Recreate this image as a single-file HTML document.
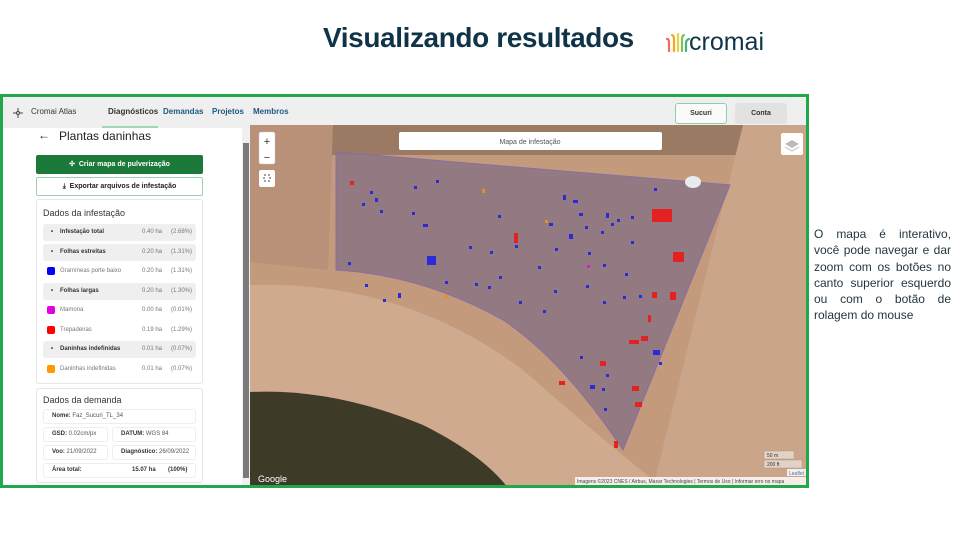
<!DOCTYPE html><html><head><meta charset="utf-8"><style>
*{box-sizing:border-box;margin:0;padding:0}
body{width:960px;height:540px;background:#fff;position:relative;overflow:hidden;font-family:"Liberation Sans",sans-serif}
.a{position:absolute}
.title{left:323px;top:22px;font-size:28px;font-weight:bold;color:#0f3447;letter-spacing:-0.4px}
.frame{left:0;top:94px;width:809px;height:394px;border:3px solid #22a84a;background:#fff;overflow:hidden}
.nav{left:0;top:0;width:803px;height:31px;background:#efefef;font-size:8px}
.side{font-size:7px;color:#333}
.row{position:absolute;left:43px;width:153px;height:17px;border-radius:3px;font-size:6px;line-height:17px}
.row.g{background:#efefef;font-weight:bold}
.row span{position:absolute}
.box{position:absolute;border:1px solid #e6e6e6;border-radius:3px;background:#fff}
.cell{position:absolute;border:1px solid #eee;border-radius:3px;height:15px;font-size:6px;line-height:13px;padding-left:8px;color:#555}
.cell b{color:#333}
.para div{text-align:justify;text-align-last:justify;white-space:nowrap}
.para div.l{text-align-last:left}
</style></head><body>
<div class="a title">Visualizando resultados</div>
<div class="a" style="left:666px;top:29px">
<svg width="24" height="24" viewBox="0 0 24 24" fill="none" stroke-width="2.2" stroke-linecap="round"><path d="M3 22V13Q3 10 1 10" stroke="#f26b5b"/><path d="M8 22V10Q8 7 6 6" stroke="#f5a623"/><path d="M12 22V5" stroke="#e6d43a"/><path d="M16 22V10Q16 7 18 6" stroke="#7cc35b"/><path d="M20 22V14Q20 11 23 10" stroke="#4caf7d"/></svg></div>
<div class="a" style="left:689px;top:28px;font-size:25px;color:#0f3447">cromai</div>

<div class="a frame">
 <div class="a nav">
  <svg class="a" style="left:10px;top:11px" width="10" height="10" viewBox="0 0 10 10" fill="none" stroke="#444"><circle cx="5" cy="5" r="1.5"/><path d="M5 0v3.5M5 6.5V10M0 5h3.5M6.5 5H10"/></svg>
  <span class="a" style="left:28px;top:10px;color:#333">Cromai Atlas</span>
  <span class="a" style="left:105px;top:10px;color:#333;font-weight:bold">Diagnósticos</span>
  <div class="a" style="left:99px;top:29px;width:56px;height:2px;background:#9fd8b5"></div>
  <span class="a" style="left:160px;top:10px;color:#1c5a80;font-weight:bold">Demandas</span>
  <span class="a" style="left:209px;top:10px;color:#1c5a80;font-weight:bold">Projetos</span>
  <span class="a" style="left:250px;top:10px;color:#1c5a80;font-weight:bold">Membros</span>
  <div class="a" style="left:672px;top:6px;width:52px;height:21px;border:1px solid #8fcfa7;border-radius:3px;background:#fafafa;text-align:center;line-height:19px;font-weight:bold;color:#333;font-size:7px">Sucuri</div>
  <div class="a" style="left:732px;top:6px;width:52px;height:21px;border-radius:3px;background:#e2e2e2;text-align:center;line-height:21px;font-weight:bold;color:#333;font-size:7px">Conta</div>
 </div>
 <div class="a side" style="left:0;top:31px;width:240px;height:360px">
  <span class="a" style="left:35px;top:0px;font-size:12px;color:#222">←</span>
  <span class="a" style="left:56px;top:1px;font-size:12px;color:#222">Plantas daninhas</span>
  <div class="a" style="left:33px;top:27px;width:167px;height:19px;background:#1b7a3a;border-radius:2px;color:#fff;font-weight:bold;text-align:center;line-height:19px">✣ &nbsp;Criar mapa de pulverização</div>
  <div class="a" style="left:33px;top:49px;width:167px;height:19px;border:1px solid #9fd1b1;border-radius:2px;color:#222;font-weight:bold;text-align:center;line-height:17px">⤓ &nbsp;Exportar arquivos de infestação</div>
  <div class="box" style="left:33px;top:71px;width:167px;height:185px"></div>
  <span class="a" style="left:40px;top:80px;font-size:9px;color:#333">Dados da infestação</span>
  <div class="row g" style="top:96px;left:40px"><span style="left:8px">•</span><span style="left:17px">Infestação total</span><span style="left:99px;font-weight:normal;color:#777">0.40 ha</span><span style="left:128px;font-weight:normal;color:#777">(2.68%)</span></div>
  <div class="row g" style="top:116px;left:40px"><span style="left:8px">•</span><span style="left:17px">Folhas estreitas</span><span style="left:99px;font-weight:normal;color:#777">0.20 ha</span><span style="left:128px;font-weight:normal;color:#777">(1.31%)</span></div>
  <div class="row" style="top:135px;left:40px;color:#777"><span style="left:4px;top:4px;width:8px;height:8px;background:#00f;border-radius:2px"></span><span style="left:17px">Gramíneas porte baixo</span><span style="left:99px">0.20 ha</span><span style="left:128px">(1.31%)</span></div>
  <div class="row g" style="top:155px;left:40px"><span style="left:8px">•</span><span style="left:17px">Folhas largas</span><span style="left:99px;font-weight:normal;color:#777">0.20 ha</span><span style="left:128px;font-weight:normal;color:#777">(1.30%)</span></div>
  <div class="row" style="top:174px;left:40px;color:#777"><span style="left:4px;top:4px;width:8px;height:8px;background:#e000e0;border-radius:2px"></span><span style="left:17px">Mamona</span><span style="left:99px">0.00 ha</span><span style="left:128px">(0.01%)</span></div>
  <div class="row" style="top:194px;left:40px;color:#777"><span style="left:4px;top:4px;width:8px;height:8px;background:#f00;border-radius:2px"></span><span style="left:17px">Trepadeiras</span><span style="left:99px">0.19 ha</span><span style="left:128px">(1.29%)</span></div>
  <div class="row g" style="top:213px;left:40px"><span style="left:8px">•</span><span style="left:17px">Daninhas indefinidas</span><span style="left:99px;font-weight:normal;color:#777">0.01 ha</span><span style="left:128px;font-weight:normal;color:#777">(0.07%)</span></div>
  <div class="row" style="top:233px;left:40px;color:#777"><span style="left:4px;top:4px;width:8px;height:8px;background:#f90;border-radius:2px"></span><span style="left:17px">Daninhas indefinidas</span><span style="left:99px">0.01 ha</span><span style="left:128px">(0.07%)</span></div>
  <div class="box" style="left:33px;top:260px;width:167px;height:95px"></div>
  <span class="a" style="left:40px;top:267px;font-size:9px;color:#333">Dados da demanda</span>
  <div class="cell" style="left:40px;top:281px;width:153px"><b>Nome:</b> Faz_Sucuri_TL_34</div>
  <div class="cell" style="left:40px;top:299px;width:65px"><b>GSD:</b> 0.02cm/px</div>
  <div class="cell" style="left:109px;top:299px;width:84px"><b>DATUM:</b> WGS 84</div>
  <div class="cell" style="left:40px;top:317px;width:65px"><b>Voo:</b> 21/09/2022</div>
  <div class="cell" style="left:109px;top:317px;width:84px"><b>Diagnóstico:</b> 26/09/2022</div>
  <div class="cell" style="left:40px;top:335px;width:153px"><b>Área total:</b><b style="position:absolute;left:88px">15.07 ha</b><b style="position:absolute;left:124px">(100%)</b></div>
 </div>
 <div class="a" style="left:239px;top:31px;width:8px;height:360px;background:#f0f0f0"></div>
 <div class="a" style="left:240px;top:46px;width:6px;height:335px;background:#7a7a7a"></div>
 <svg class="a" style="left:247px;top:28px" width="556" height="363" viewBox="247 125 556 363">
  <rect x="247" y="125" width="556" height="363" fill="#c49a7d"/>
  <rect x="247" y="125" width="556" height="30" fill="#9a7a62"/>
  <path d="M247 125L330 125L325 270L247 262Z" fill="#b99078"/>
  <path d="M740 125L803 125L803 488L650 488Z" fill="#caa58a"/>
  <path d="M247 285Q400 280 520 370Q600 440 660 488L247 488Z" fill="#d0aa8e"/>
  <path d="M247 392Q330 388 420 425Q480 455 505 488L247 488Z" fill="#3e3a28"/>
  <path d="M333 152L727 185L620 450Q560 360 500 320Q420 275 333 270Z" fill="#8e7683" opacity="0.9"/>
  <path d="M333 152L727 185L620 450Q560 360 500 320Q420 275 333 270Z" fill="none" stroke="#8a6ea0" stroke-width="1"/>
  <ellipse cx="690" cy="182" rx="8" ry="6" fill="#e8ecef"/>
  <g fill="#2b2bd8">
   <rect x="367" y="191" width="3" height="3"/><rect x="372" y="198" width="3" height="4"/><rect x="377" y="210" width="3" height="3"/><rect x="409" y="212" width="3" height="3"/><rect x="411" y="186" width="3" height="3"/><rect x="420" y="224" width="5" height="3"/><rect x="433" y="180" width="3" height="3"/><rect x="359" y="203" width="3" height="3"/><rect x="345" y="262" width="3" height="3"/><rect x="362" y="284" width="3" height="3"/><rect x="380" y="299" width="3" height="3"/><rect x="395" y="293" width="3" height="5"/><rect x="424" y="256" width="9" height="9"/><rect x="442" y="281" width="3" height="3"/><rect x="466" y="246" width="3" height="3"/><rect x="472" y="283" width="3" height="3"/><rect x="485" y="286" width="3" height="3"/><rect x="487" y="251" width="3" height="3"/><rect x="496" y="276" width="3" height="3"/><rect x="495" y="215" width="3" height="3"/><rect x="512" y="245" width="3" height="3"/><rect x="516" y="301" width="3" height="3"/><rect x="540" y="310" width="3" height="3"/><rect x="546" y="223" width="4" height="3"/><rect x="551" y="290" width="3" height="3"/><rect x="560" y="195" width="3" height="5"/><rect x="570" y="200" width="5" height="3"/><rect x="566" y="234" width="4" height="5"/><rect x="582" y="226" width="3" height="3"/><rect x="583" y="285" width="3" height="3"/><rect x="577" y="356" width="3" height="3"/><rect x="576" y="213" width="4" height="3"/><rect x="587" y="385" width="5" height="4"/><rect x="599" y="388" width="3" height="3"/><rect x="603" y="213" width="3" height="5"/><rect x="585" y="252" width="3" height="3"/><rect x="598" y="231" width="3" height="3"/><rect x="608" y="223" width="3" height="3"/><rect x="601" y="408" width="3" height="3"/><rect x="614" y="219" width="3" height="3"/><rect x="628" y="241" width="3" height="3"/><rect x="600" y="264" width="3" height="3"/><rect x="622" y="273" width="3" height="3"/><rect x="650" y="350" width="7" height="5"/><rect x="656" y="362" width="3" height="3"/><rect x="651" y="188" width="3" height="3"/><rect x="620" y="296" width="3" height="3"/><rect x="628" y="216" width="3" height="3"/><rect x="600" y="301" width="3" height="3"/><rect x="535" y="266" width="3" height="3"/><rect x="552" y="248" width="3" height="3"/><rect x="636" y="295" width="3" height="3"/><rect x="603" y="374" width="3" height="3"/></g>
  <g fill="#e52222">
   <rect x="347" y="181" width="4" height="4"/><rect x="511" y="233" width="4" height="10"/><rect x="649" y="209" width="20" height="13"/><rect x="670" y="252" width="11" height="10"/><rect x="649" y="292" width="5" height="6"/><rect x="667" y="292" width="6" height="8"/><rect x="645" y="315" width="3" height="7"/><rect x="638" y="336" width="7" height="5"/><rect x="597" y="361" width="6" height="5"/><rect x="626" y="340" width="10" height="4"/><rect x="556" y="381" width="6" height="4"/><rect x="629" y="386" width="7" height="5"/><rect x="632" y="402" width="7" height="5"/><rect x="611" y="441" width="4" height="7"/></g>
  <g fill="#e8901a"><rect x="479" y="189" width="3" height="4"/><rect x="542" y="220" width="3" height="3"/><rect x="442" y="295" width="3" height="3"/></g>
  <rect x="584" y="265" width="3" height="3" fill="#d020d0"/>
  <rect x="256" y="132" width="16" height="32" rx="2" fill="#fff" stroke="#ccc" stroke-width="0.5"/>
  <text x="264" y="145" font-size="11" text-anchor="middle" fill="#333">+</text><text x="264" y="161" font-size="11" text-anchor="middle" fill="#333">−</text>
  <rect x="256" y="170" width="16" height="17" rx="2" fill="#fff"/>
  <rect x="261" y="175" width="6" height="6" fill="none" stroke="#444" stroke-dasharray="2 2"/>
  <rect x="396" y="132" width="263" height="18" rx="2" fill="#fff"/>
  <text x="527" y="144" font-size="7" text-anchor="middle" fill="#555" font-family="Liberation Sans">Mapa de infestação</text>
  <rect x="778" y="133" width="22" height="22" rx="2" fill="#fff"/>
  <path d="M782 144l7-4 7 4-7 4z" fill="#bbb"/><path d="M782 147l7 4 7-4" fill="none" stroke="#bbb"/>
  <rect x="761" y="451" width="30" height="8" fill="#fff" opacity="0.5" stroke="#888" stroke-width="0.5"/>
  <rect x="761" y="460" width="38" height="8" fill="#fff" opacity="0.5" stroke="#888" stroke-width="0.5"/>
  <text x="764" y="457" font-size="5" fill="#333">50 m</text><text x="764" y="466" font-size="5" fill="#333">200 ft</text>
  <rect x="784" y="469" width="19" height="7" fill="#fff" opacity="0.8"/><text x="786" y="475" font-size="5" fill="#3a7ac0">Leaflet</text>
  <rect x="572" y="477" width="231" height="8" fill="#fff" opacity="0.8"/>
  <text x="574" y="483" font-size="5" fill="#444">Imagens ©2023 CNES / Airbus, Maxar Technologies  |  Termos de Uso  |  Informar erro no mapa</text>
  <text x="255" y="482" font-size="9" fill="#fff">Google</text>
 </svg>
</div>
<div class="a para" style="left:814px;top:226px;width:137px;font-size:12px;line-height:16.3px;color:#1f3440">
<div>O mapa é interativo,</div><div>você pode navegar e dar</div><div>zoom com os botões no</div><div>canto superior esquerdo</div><div>ou com o botão de</div><div class="l">rolagem do mouse</div></div>
</body></html>
